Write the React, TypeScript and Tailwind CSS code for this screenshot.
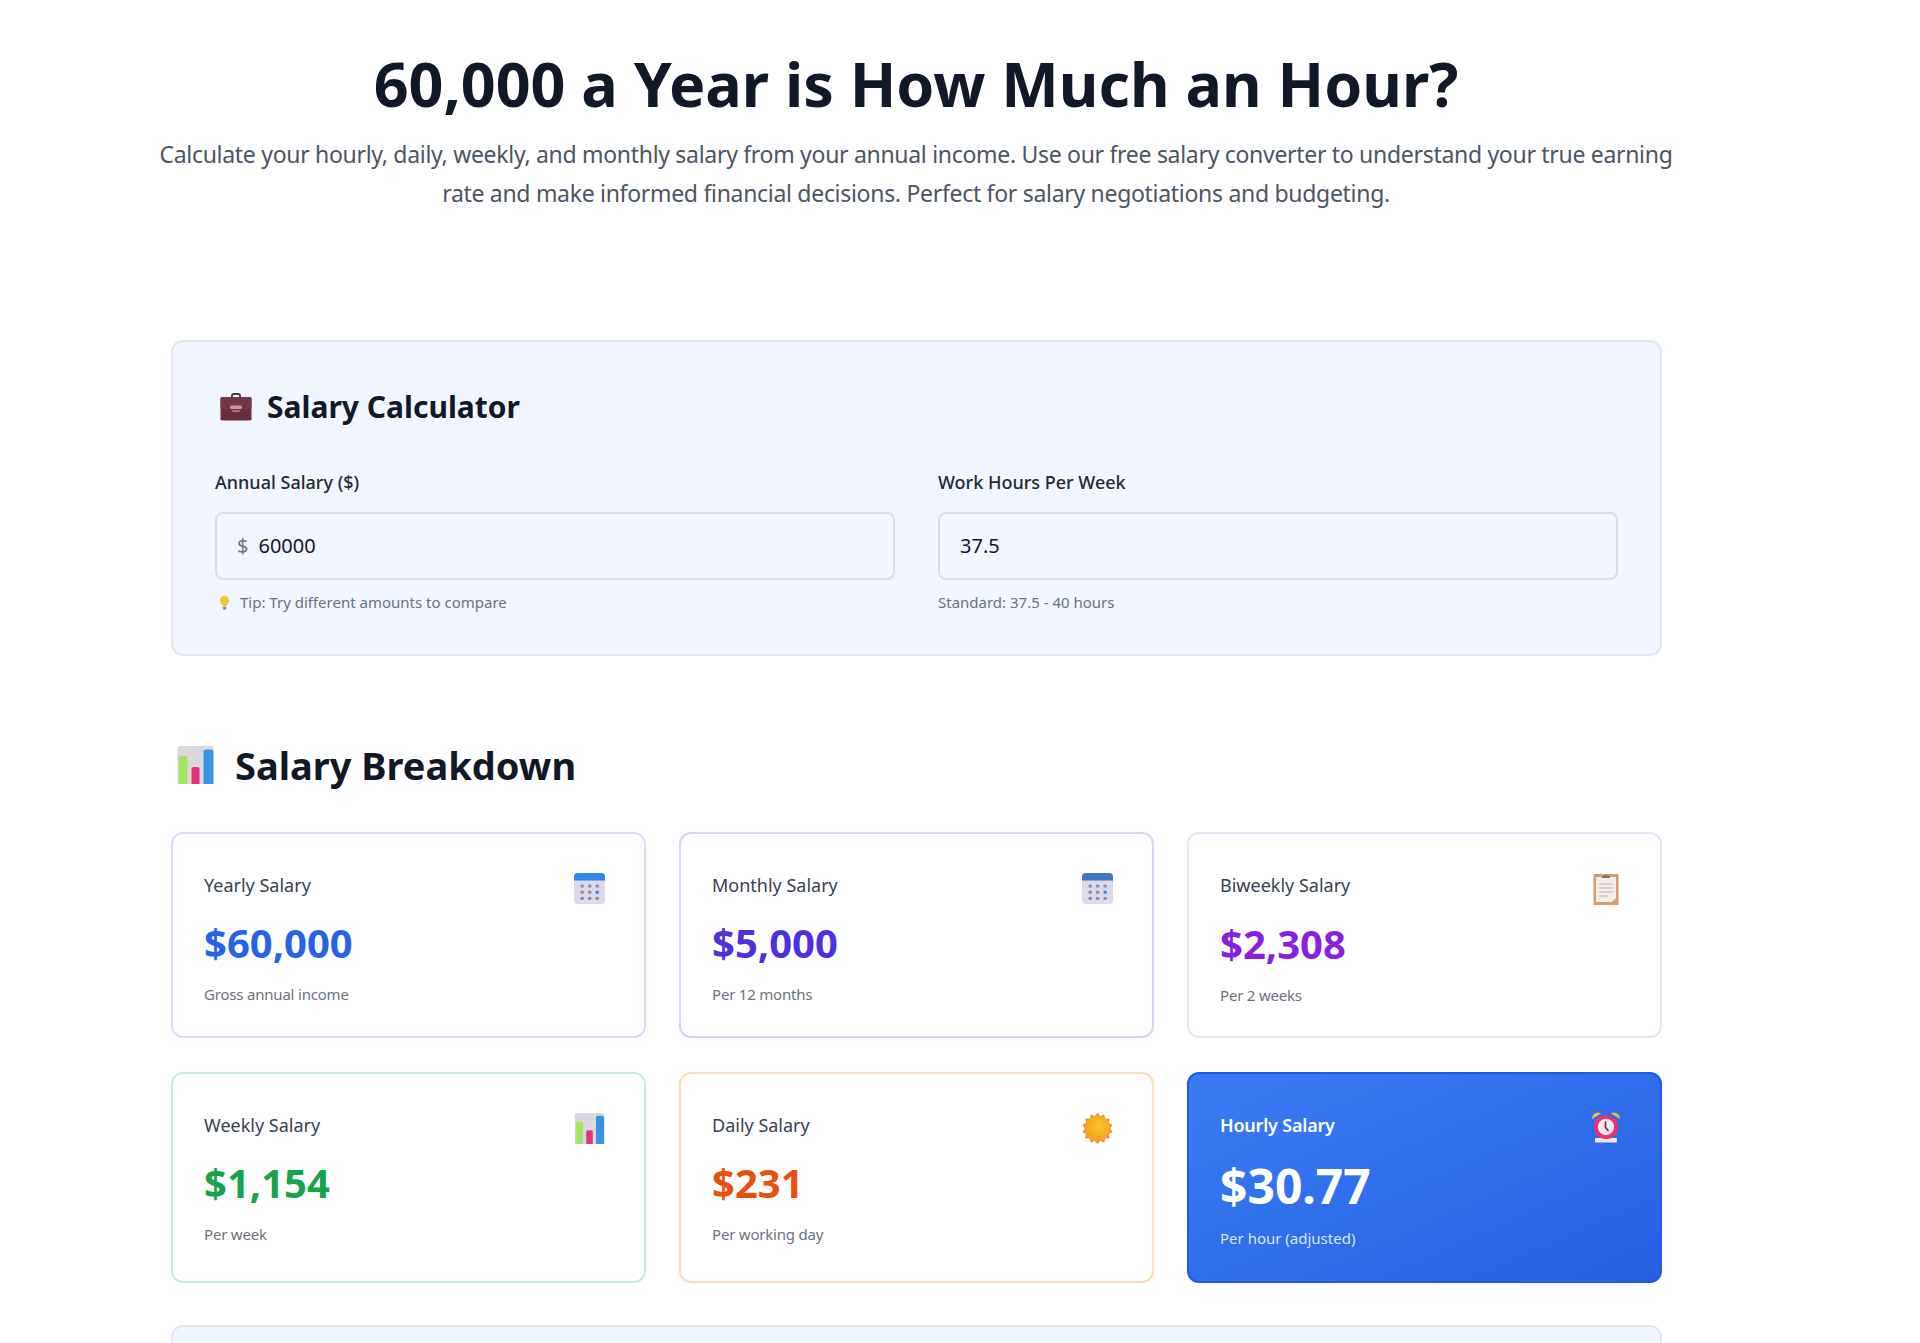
import clsx from "clsx";

function Briefcase({ className }: { className?: string }) {
  return (
    <svg viewBox="0 0 32 28" className={className}>
      <path d="M12 5V3C12 1.8 13 1 14 1h4c1 0 2 .8 2 2v2" fill="none" stroke="#4a3a3c" strokeWidth="2" />
      <rect x="0.5" y="4" width="31" height="23.5" rx="1.5" fill="#6b2c40" />
      <rect x="0.5" y="4" width="31" height="12" rx="1.5" fill="#763548" />
      <rect x="10" y="12.5" width="12" height="3.5" rx="1.5" fill="#c79a9f" />
      <rect x="12" y="17" width="8" height="2" rx="1" fill="#a9757f" />
    </svg>
  );
}

function BarChart({ className }: { className?: string }) {
  return (
    <svg viewBox="0 0 36 38" className={className}>
      <rect x="0" y="0" width="36" height="38" rx="2" fill="#d8d8de" />
      <path d="M1 38V13a3 3 0 0 1 3-3h3a3 3 0 0 1 3 3v25z" fill="#a5e55d" />
      <path d="M14 38V23a2 2 0 0 1 2-2h4a2 2 0 0 1 2 2v15z" fill="#e8317c" />
      <path d="M26 38V6a2.500 2.500 0 0 1 2.500-2.500h5A2.500 2.500 0 0 1 36 6v32z" fill="#3a93e0" />
    </svg>
  );
}

function Calendar({ top, className }: { top: string; className?: string }) {
  const dots = [0, 1, 2].flatMap((r) => [0, 1, 2].map((c) => [c, r]));
  return (
    <svg viewBox="0 0 31 31" className={className}>
      <rect x="0" y="0" width="31" height="31" rx="4" fill="#dcd9ea" />
      <path d="M0 7.500V4a4 4 0 0 1 4-4h23a4 4 0 0 1 4 4v3.500z" fill={top} />
      {dots.map(([c, r]) => (
        <rect
          key={`${c}-${r}`}
          x={6.5 + c * 7.5}
          y={11.5 + r * 6.2}
          width="3.4"
          height="3"
          rx="0.8"
          fill={c === 2 && r === 1 ? "#2f86ee" : "#8f8ba3"}
        />
      ))}
    </svg>
  );
}

function Clipboard({ className }: { className?: string }) {
  return (
    <svg viewBox="0 0 26 32" className={className}>
      <rect x="0.5" y="1" width="25" height="31" rx="1" fill="#d99a6c" />
      <rect x="3" y="4" width="20" height="25" fill="#f1eeec" />
      <path d="M19 29h4v-4z" fill="#d99a6c" />
      <path d="M9 5V3h2.500a1.500 1.500 0 0 1 3 0H17v2z" fill="#77757c" />
      <path d="M6 11h14M6 15h14M6 19h14M6 23h9" stroke="#b9b3b0" strokeWidth="1" />
    </svg>
  );
}

function Sun({ className }: { className?: string }) {
  const rays = Array.from({ length: 14 }, (_, i) => i * (360 / 14));
  return (
    <svg viewBox="0 0 32 32" className={className}>
      <defs>
        <radialGradient id="sunFill" cx="0.55" cy="0.4" r="0.65">
          <stop offset="0" stopColor="#fdc52e" />
          <stop offset="1" stopColor="#f29a1f" />
        </radialGradient>
      </defs>
      {rays.map((a) => (
        <path key={a} d="M13.500 3L16 0l2.500 3z" fill="#f0811e" transform={`rotate(${a} 16 16)`} />
      ))}
      <circle cx="16" cy="16" r="13.500" fill="url(#sunFill)" />
    </svg>
  );
}

function Alarm({ className }: { className?: string }) {
  return (
    <svg viewBox="0 0 30 33" className={className}>
      <path d="M1 9a6 6 0 0 1 9-5.500z" fill="#f2b93b" />
      <path d="M29 9a6 6 0 0 0-9-5.500z" fill="#f2b93b" />
      <rect x="4" y="28" width="22" height="4.500" rx="1" fill="#f3e4ea" />
      <circle cx="15" cy="17" r="12" fill="#ee2f6b" />
      <circle cx="15" cy="17" r="8.200" fill="#f7e9ee" />
      <path d="M14.500 11.500v6l3 3.500" fill="none" stroke="#4b3a48" strokeWidth="1.600" />
    </svg>
  );
}

function Bulb({ className }: { className?: string }) {
  return (
    <svg viewBox="0 0 12 16" className={className}>
      <path d="M6 0.500a5 5 0 0 1 3 9L8 12H4L3 9.500a5 5 0 0 1 3-9z" fill="#f8c437" />
      <rect x="4.200" y="12.500" width="3.600" height="3" rx="0.800" fill="#8a8a90" />
    </svg>
  );
}

const cards = [
  { label: "Yearly Salary", value: "$60,000", note: "Gross annual income", color: "text-[#2563eb]", border: "border-[#d6dffc]", icon: <Calendar top="#2f86ee" className="h-[31px] w-[31px]" /> },
  { label: "Monthly Salary", value: "$5,000", note: "Per 12 months", color: "text-[#4f30e0]", border: "border-[#d7d4f8]", icon: <Calendar top="#3b76c4" className="h-[31px] w-[31px]" /> },
  { label: "Biweekly Salary", value: "$2,308", note: "Per 2 weeks", color: "text-[#8a1fe0]", border: "border-[#e8e4f5]", icon: <Clipboard className="h-[32px] w-[26px]" /> },
  { label: "Weekly Salary", value: "$1,154", note: "Per week", color: "text-[#16a34a]", border: "border-[#c5efdc]", icon: <BarChart className="h-[31px] w-[31px]" /> },
  { label: "Daily Salary", value: "$231", note: "Per working day", color: "text-[#ea4f0c]", border: "border-[#fbdcbc]", icon: <Sun className="h-[31px] w-[31px]" /> },
];

function SalaryCard({ label, value, note, color, border, icon }: (typeof cards)[number]) {
  return (
    <div className={clsx("rounded-xl border-2 bg-white pt-[39px] pr-[39px] pb-[31px] pl-[31px]", border)}>
      <div className="flex items-start justify-between">
        <span className="text-[18px] leading-[24px] text-[#374151]">{label}</span>
        <span className="flex w-[31px] justify-center">{icon}</span>
      </div>
      <p className={clsx("mt-[17px] text-[40px] leading-[44px] font-bold", color)}>{value}</p>
      <p className="mt-[19px] text-[15px] leading-[20px] tracking-[-0.2px] text-[#6b7280]">{note}</p>
    </div>
  );
}

export default function App() {
  return (
    <div className="h-[1343px] overflow-hidden bg-white font-['Noto_Sans',sans-serif] text-[#111827]">
      <div className="ml-[148px] w-[1536px] pt-[48px]">
        <h1 className="text-center text-[61px] leading-[72px] font-bold text-[#111827]">60,000 a Year is How Much an Hour?</h1>
        <p className="mt-[15px] mb-[1px] text-center text-[23px] leading-[39px] tracking-[-0.3px] text-[#4b5563]">
          Calculate your hourly, daily, weekly, and monthly salary from your annual income. Use our free salary converter to understand your true earning rate and make informed financial decisions. Perfect for salary negotiations and budgeting.
        </p>

        <div className="mr-[22px] ml-[23px]">
          <section className="mt-[127px] rounded-xl border-2 border-[#e3e6ee] bg-[#f1f5fe] px-[42px] pt-[45px] pb-[42px]">
            <h2 className="flex items-center gap-[15px] pl-[5px] text-[30px] leading-[40px] font-bold text-[#111827]">
              <Briefcase className="h-[28px] w-[32px]" />
              Salary Calculator
            </h2>
            <div className="mt-[43px] grid grid-cols-2 gap-[43px]">
              <div>
                <label className="block text-[18px] leading-[24px] font-medium text-[#1f2937]">Annual Salary ($)</label>
                <div className="mt-[18px] flex h-[68px] items-center gap-[10px] rounded-lg border-2 border-[#d8dce6] px-[20px] text-[20px]">
                  <span className="text-[#6b7280]">$</span>
                  <input defaultValue="60000" className="w-full bg-transparent outline-none" />
                </div>
                <p className="mt-[12px] flex items-center gap-[10px] pl-[4px] text-[15px] leading-[20px] text-[#6b7280]">
                  <Bulb className="h-[15px] w-[11px]" />
                  Tip: Try different amounts to compare
                </p>
              </div>
              <div>
                <label className="block text-[18px] leading-[24px] font-medium text-[#1f2937]">Work Hours Per Week</label>
                <div className="mt-[18px] flex h-[68px] items-center rounded-lg border-2 border-[#d8dce6] px-[20px] text-[20px]">
                  <input defaultValue="37.5" className="w-full bg-transparent outline-none" />
                </div>
                <p className="mt-[12px] text-[15px] leading-[20px] text-[#6b7280]">Standard: 37.5 - 40 hours</p>
              </div>
            </div>
          </section>

          <h2 className="mt-[85px] flex items-center gap-[21px] pl-[6px] text-[38px] leading-[48px] font-bold text-[#111827]">
            <BarChart className="h-[38px] w-[37px]" />
            Salary Breakdown
          </h2>

          <div className="mt-[43px] grid grid-cols-3 gap-x-[33px] gap-y-[34px]">
            {cards.map((c) => (
              <SalaryCard key={c.label} {...c} />
            ))}
            <div className="rounded-xl border-2 border-[#1d5be6] bg-gradient-to-br from-[#3b7cf2] to-[#2560e4] pt-[39px] pr-[39px] pb-[33px] pl-[31px] text-white">
              <div className="flex items-start justify-between">
                <span className="text-[18px] leading-[24px] font-semibold tracking-[-0.2px]">Hourly Salary</span>
                <Alarm className="-mt-[3px] h-[33px] w-[30px]" />
              </div>
              <p className="mt-[18px] text-[48px] leading-[50px] font-bold">$30.77</p>
              <p className="mt-[17px] text-[15px] leading-[20px] text-[#dbe7ff]">Per hour (adjusted)</p>
            </div>
          </div>

          <div className="mt-[42px] h-[60px] rounded-xl border-2 border-[#e3e6ee] bg-[#f0f6fe]" />
        </div>
      </div>
    </div>
  );
}
